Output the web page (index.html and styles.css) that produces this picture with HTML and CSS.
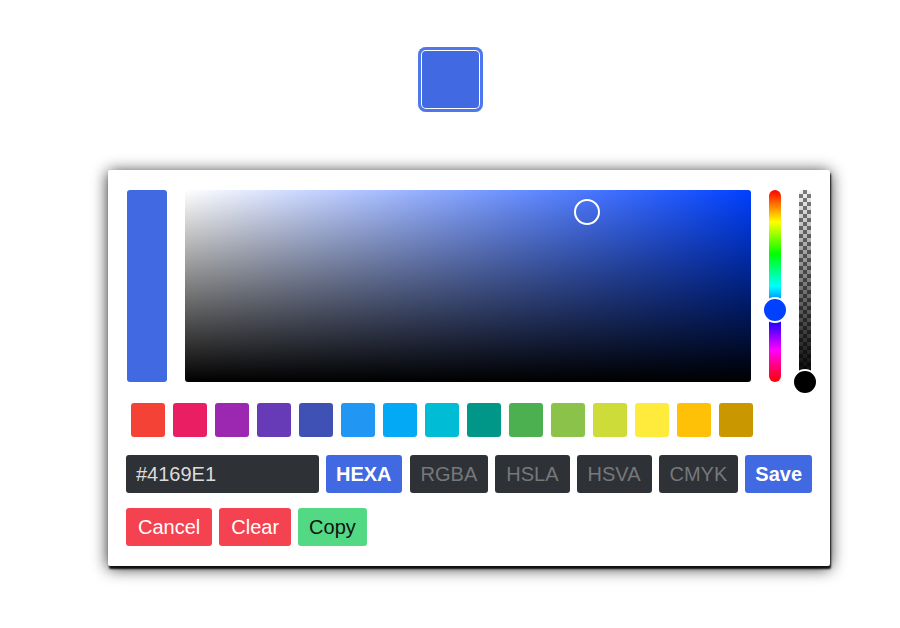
FILE: index.html
```html
<!DOCTYPE html>
<html lang="en">
<head>
  <meta charset="UTF-8" />
  <meta name="viewport" content="width=device-width, initial-scale=1.0" />
  <title>Color Picker</title>
  <link rel="stylesheet" href="styles.css">
</head>
<body>

  <button type="button" class="trigger" aria-label="toggle color picker"></button>

  <div class="pcr-app">
    <div class="selection">
      <div class="preview"></div>
      <div class="palette">
        <div class="palette-cursor"></div>
      </div>
      <div class="slider hue">
        <div class="knob hue-knob"></div>
      </div>
      <div class="slider opacity">
        <div class="knob opacity-knob"></div>
      </div>
    </div>

    <div class="swatches">
      <button type="button" class="swatch" style="background:#f44336"></button>
      <button type="button" class="swatch" style="background:#e91e63"></button>
      <button type="button" class="swatch" style="background:#9c27b0"></button>
      <button type="button" class="swatch" style="background:#673ab7"></button>
      <button type="button" class="swatch" style="background:#3f51b5"></button>
      <button type="button" class="swatch" style="background:#2196f3"></button>
      <button type="button" class="swatch" style="background:#03a9f4"></button>
      <button type="button" class="swatch" style="background:#00bcd4"></button>
      <button type="button" class="swatch" style="background:#009688"></button>
      <button type="button" class="swatch" style="background:#4caf50"></button>
      <button type="button" class="swatch" style="background:#8bc34a"></button>
      <button type="button" class="swatch" style="background:#cddc39"></button>
      <button type="button" class="swatch" style="background:#ffeb3b"></button>
      <button type="button" class="swatch" style="background:#ffc107"></button>
      <button type="button" class="swatch" style="background:#c99700"></button>
    </div>

    <div class="interaction">
      <input type="text" class="result" value="#4169E1" spellcheck="false" />
      <button type="button" class="btn type active">HEXA</button>
      <button type="button" class="btn type">RGBA</button>
      <button type="button" class="btn type">HSLA</button>
      <button type="button" class="btn type">HSVA</button>
      <button type="button" class="btn type">CMYK</button>
      <button type="button" class="btn save">Save</button>
    </div>

    <div class="interaction">
      <button type="button" class="btn cancel">Cancel</button>
      <button type="button" class="btn cancel">Clear</button>
      <button type="button" class="btn copy">Copy</button>
    </div>
  </div>

</body>
</html>
```

FILE: styles.css
```css
body {
  margin: 0;
  min-height: 628px;
  font-family: "Liberation Sans", Arial, sans-serif;
  background: #fff;
}

.trigger {
  display: block;
  width: 65px;
  height: 65px;
  margin: 47px auto 0;
  padding: 0;
  border: none;
  border-radius: 8px;
  background: #4169e1;
  box-shadow: inset 0 0 0 3px #4d77ea, inset 0 0 0 4px #fff;
  cursor: pointer;
}

.pcr-app {
  width: 722px;
  box-sizing: border-box;
  margin: 58px 0 0 108px;
  padding: 20px 19px 20px 18px;
  border-radius: 2px;
  background: #fff;
  box-shadow: 1px 3px 2px rgba(0,0,0,0.9), 0 2px 16px rgba(0,0,0,0.85);
}

.selection {
  display: flex;
  height: 192px;
  padding-left: 1px;
}

.preview {
  width: 40px;
  border-radius: 3px;
  background: #4169e1;
}

.palette {
  position: relative;
  width: 566px;
  margin-left: 18px;
  border-radius: 3px;
  background: linear-gradient(to top, #000, rgba(0,0,0,0)),
              linear-gradient(to right, #fff, #0040ff);
}

.palette-cursor {
  position: absolute;
  left: 389px;
  top: 9px;
  width: 22px;
  height: 22px;
  border: 2px solid #fff;
  border-radius: 50%;
}

.slider {
  position: relative;
  width: 12px;
  margin-left: 18px;
  border-radius: 6px;
}

.hue {
  background: linear-gradient(to bottom, #f00, #ff0 16.6%, #0f0 33.3%, #0ff 50%, #00f 66.6%, #f0f 83.3%, #f00);
}

.opacity {
  border-radius: 4px 4px 0 0;
  background: linear-gradient(to bottom, rgba(0,0,0,0), #000),
              conic-gradient(#7a7a7a 25%, #f0f0f0 0 50%, #7a7a7a 0 75%, #f0f0f0 0) 0 0 / 8px 8px;
}

.knob {
  position: absolute;
  left: -7px;
  width: 22px;
  height: 22px;
  border: 2px solid #fff;
  border-radius: 50%;
}

.hue-knob {
  top: 107px;
  background: #0040ff;
}

.opacity-knob {
  top: 179px;
  background: #000;
}

.swatches {
  display: flex;
  gap: 8px;
  margin-top: 21px;
  padding-left: 5px;
}

.swatch {
  width: 34px;
  height: 34px;
  padding: 0;
  border: none;
  border-radius: 3px;
  cursor: pointer;
}

.interaction {
  display: flex;
  gap: 7px;
  margin-top: 18px;
}

.interaction + .interaction {
  margin-top: 15px;
}

.result {
  width: 193px;
  height: 38px;
  box-sizing: border-box;
  padding: 0 10px;
  border: none;
  border-radius: 3px;
  background: #2e3135;
  color: #dcdcdc;
  font-family: inherit;
  font-size: 20px;
}

.btn {
  height: 38px;
  padding: 0 11px;
  border: none;
  border-radius: 3px;
  font-family: inherit;
  font-size: 20px;
  cursor: pointer;
}

.type {
  background: #2e3135;
  color: #75787c;
}

.type.active,
.save {
  padding: 0 10px;
  background: #4169e1;
  color: #fff;
  font-weight: bold;
}

.type.active {
  margin-right: 1px;
}

.cancel {
  padding: 0 12px;
  background: #f44250;
  color: #fff;
}

.copy {
  background: #53d883;
  color: #111;
}
```
